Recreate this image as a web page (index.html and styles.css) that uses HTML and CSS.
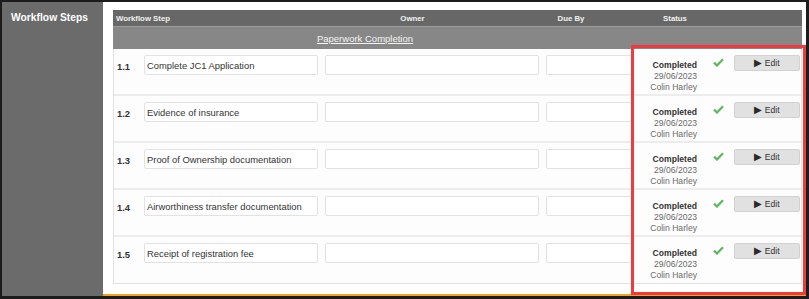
FILE: index.html
```html
<!DOCTYPE html>
<html lang="en">
<head>
    <meta charset="UTF-8">
    <meta name="viewport" content="width=device-width, initial-scale=1.0">
    <title>Workflow Steps</title>
    <link rel="stylesheet" href="styles.css">
</head>
<body>
    <div class="app">
        <div class="sidebar">Workflow Steps</div>

        <div class="main">
            <div class="head-row">
                <div class="h-step">Workflow Step</div>
                <div class="h-owner">Owner</div>
                <div class="h-due">Due By</div>
                <div class="h-status">Status</div>
                <div></div>
            </div>
            <div class="group-row">
                <a class="group-title" href="#">Paperwork Completion</a>
            </div>

            <div class="steps">
                <div class="step">
                    <div class="num">1.1</div>
                    <div class="field">Complete JC1 Application</div>
                    <div class="field owner"></div>
                    <div class="field due"></div>
                    <div class="status"><b>Completed</b><span>29/06/2023</span><span>Colin Harley</span></div>
                    <div class="check"><svg width="11" height="9" viewBox="0 0 11 9"><path d="M1 4.6 L4 7.5 L10 1.2" fill="none" stroke="#5cb85c" stroke-width="2.2"/></svg></div>
                    <button class="edit"><span class="tri">&#9654;</span> Edit</button>
                </div>
                <div class="step">
                    <div class="num">1.2</div>
                    <div class="field">Evidence of insurance</div>
                    <div class="field owner"></div>
                    <div class="field due"></div>
                    <div class="status"><b>Completed</b><span>29/06/2023</span><span>Colin Harley</span></div>
                    <div class="check"><svg width="11" height="9" viewBox="0 0 11 9"><path d="M1 4.6 L4 7.5 L10 1.2" fill="none" stroke="#5cb85c" stroke-width="2.2"/></svg></div>
                    <button class="edit"><span class="tri">&#9654;</span> Edit</button>
                </div>
                <div class="step">
                    <div class="num">1.3</div>
                    <div class="field">Proof of Ownership documentation</div>
                    <div class="field owner"></div>
                    <div class="field due"></div>
                    <div class="status"><b>Completed</b><span>29/06/2023</span><span>Colin Harley</span></div>
                    <div class="check"><svg width="11" height="9" viewBox="0 0 11 9"><path d="M1 4.6 L4 7.5 L10 1.2" fill="none" stroke="#5cb85c" stroke-width="2.2"/></svg></div>
                    <button class="edit"><span class="tri">&#9654;</span> Edit</button>
                </div>
                <div class="step">
                    <div class="num">1.4</div>
                    <div class="field">Airworthiness transfer documentation</div>
                    <div class="field owner"></div>
                    <div class="field due"></div>
                    <div class="status"><b>Completed</b><span>29/06/2023</span><span>Colin Harley</span></div>
                    <div class="check"><svg width="11" height="9" viewBox="0 0 11 9"><path d="M1 4.6 L4 7.5 L10 1.2" fill="none" stroke="#5cb85c" stroke-width="2.2"/></svg></div>
                    <button class="edit"><span class="tri">&#9654;</span> Edit</button>
                </div>
                <div class="step">
                    <div class="num">1.5</div>
                    <div class="field">Receipt of registration fee</div>
                    <div class="field owner"></div>
                    <div class="field due"></div>
                    <div class="status"><b>Completed</b><span>29/06/2023</span><span>Colin Harley</span></div>
                    <div class="check"><svg width="11" height="9" viewBox="0 0 11 9"><path d="M1 4.6 L4 7.5 L10 1.2" fill="none" stroke="#5cb85c" stroke-width="2.2"/></svg></div>
                    <button class="edit"><span class="tri">&#9654;</span> Edit</button>
                </div>
            </div>

            <div class="highlight"></div>
        </div>
    </div>
</body>
</html>
```

FILE: styles.css
```css
html, body {
    margin: 0;
    padding: 0;
}
body {
    background-color: #1c1c1c;
    font-family: "Liberation Sans", Arial, sans-serif;
    height: 299px;
    overflow: hidden;
}
.app {
    display: flex;
    height: 294px;
    margin: 2px 3px 3px 2px;
}
.sidebar {
    width: 101px;
    background-color: #6b6b6b;
    color: #ffffff;
    font-weight: bold;
    font-size: 10.3px;
    padding: 10px 0 0 9px;
    box-sizing: border-box;
}
.main {
    position: relative;
    flex: 1;
    background-color: #ffffff;
    border-bottom: 2px solid #f5a31e;
    padding: 8px 4px 0 10px;
}
.head-row {
    display: grid;
    grid-template-columns: 187px 225px 92px 116px 1fr;
    height: 16px;
    align-items: center;
    background-color: #676767;
    border-bottom: 1px solid #9a9a9a;
    color: #f2f2f2;
    font-weight: bold;
    font-size: 7.8px;
}
.h-step {
    padding-left: 3px;
}
.h-owner, .h-due, .h-status {
    text-align: center;
}
.group-row {
    display: flex;
    height: 22px;
    align-items: center;
    background-color: #878787;
}
.group-title {
    width: 504px;
    text-align: center;
    color: #f4f4f4;
    font-size: 9.5px;
    text-decoration: underline;
}
.steps {
    border: 1px solid #e2e2e2;
    border-top: none;
}
.step {
    display: grid;
    grid-template-columns: 30px 181px 221px 88px 63px 24px 13px 66px;
    align-items: start;
    height: 47px;
    padding-top: 6px;
    box-sizing: border-box;
    border-bottom: 2px solid #ececec;
    background-color: #fdfdfd;
}
.step:last-child {
    border-bottom: none;
    height: 46px;
}
.num {
    padding: 6px 0 0 3px;
    font-size: 9.4px;
    font-weight: bold;
    color: #333333;
}
.field {
    width: 174px;
    height: 20px;
    box-sizing: border-box;
    border: 1px solid #e2e2e2;
    border-radius: 2px;
    background-color: #ffffff;
    padding: 4px 0 0 2px;
    font-size: 9.4px;
    color: #333333;
    white-space: nowrap;
}
.field.owner {
    width: 214px;
}
.field.due {
    width: 86px;
}
.status {
    display: flex;
    flex-direction: column;
    align-items: flex-end;
    font-size: 8.6px;
    line-height: 11px;
    color: #6a6a6a;
    padding-top: 5px;
}
.status b {
    color: #333333;
}
.check {
    padding: 3px 0 0 16px;
}
.check svg {
    display: block;
}
.edit {
    grid-column: 8;
    width: 66px;
    height: 16px;
    margin-top: 0;
    border: 1px solid #d2d2d2;
    border-radius: 2px;
    background-color: #e1e1e1;
    color: #333333;
    font-family: "Liberation Sans", Arial, sans-serif;
    font-size: 8.6px;
    padding: 0;
    line-height: 13px;
}
.tri {
    font-size: 10px;
    color: #2a2a2a;
}
.highlight {
    position: absolute;
    left: 528px;
    top: 43px;
    width: 175px;
    height: 250px;
    box-sizing: border-box;
    border: 3px solid #ef3b3f;
}
```
